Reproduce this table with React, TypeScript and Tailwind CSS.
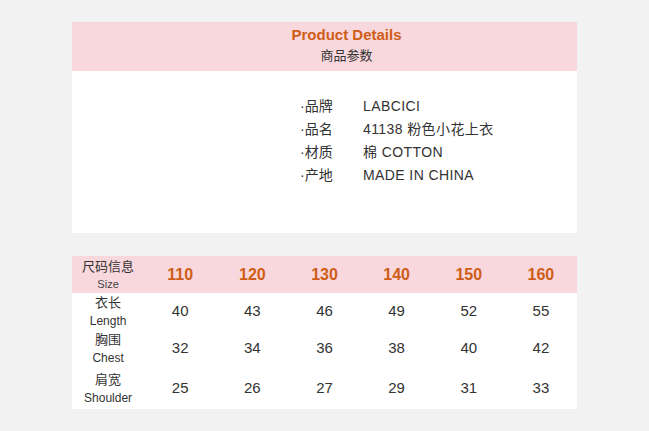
import React from 'react';

const font = { fontFamily: '"Liberation Sans", "Noto Sans CJK SC", sans-serif' };

const info = [
  { label: '品牌', value: 'LABCICI' },
  { label: '品名', value: '41138 粉色小花上衣' },
  { label: '材质', value: '棉 COTTON' },
  { label: '产地', value: 'MADE IN CHINA' },
];

const sizes = ['110', '120', '130', '140', '150', '160'];

const rows = [
  { cn: '衣长', en: 'Length', values: [40, 43, 46, 49, 52, 55], h: 'h-[36px]' },
  { cn: '胸围', en: 'Chest', values: [32, 34, 36, 38, 40, 42], h: 'h-[38px]' },
  { cn: '肩宽', en: 'Shoulder', values: [25, 26, 27, 29, 31, 33], h: 'h-[42px]' },
];

export default function App() {
  return (
    <div className="w-[649px] h-[431px] bg-[#f2f2f2] pt-[22px] pl-[72px]" style={font}>
      {/* 商品参数 */}
      <div className="w-[505px] h-[211px] bg-white">
        <div className="h-[49px] bg-[#f9d8dd] flex flex-col items-center pt-[3px] pl-[44px]">
          <div className="text-[15px] leading-[19px] font-bold text-[#cf5d17]">Product Details</div>
          <div className="text-[13px] leading-[18px] text-[#333] mt-[3px]">商品参数</div>
        </div>
        <div className="pt-[24px] pl-[228px]">
          {info.map((item) => (
            <div key={item.label} className="flex items-center h-[23px] text-[14px] text-[#333]">
              <span className="w-[63px]">·{item.label}</span>
              <span className="tracking-[0.4px]">{item.value}</span>
            </div>
          ))}
        </div>
      </div>

      {/* 尺码表 */}
      <div className="w-[505px] mt-[23px] bg-white">
        <div className="grid grid-cols-7 h-[37px] bg-[#f9d8dd] items-center">
          <div className="flex flex-col items-center">
            <span className="text-[13px] leading-[18px] text-[#333]">尺码信息</span>
            <span className="text-[11px] leading-[16px] text-[#444]">Size</span>
          </div>
          {sizes.map((s) => (
            <div key={s} className="text-center text-[16px] font-bold text-[#cf5d17]">{s}</div>
          ))}
        </div>
        {rows.map((row) => (
          <div key={row.en} className={`grid grid-cols-7 items-center ${row.h}`}>
            <div className="flex flex-col items-center">
              <span className="text-[13px] leading-[19px] text-[#333]">{row.cn}</span>
              <span className="text-[12px] leading-[18px] text-[#333]">{row.en}</span>
            </div>
            {row.values.map((v, i) => (
              <div key={i} className="text-center text-[15px] text-[#333]">{v}</div>
            ))}
          </div>
        ))}
      </div>
    </div>
  );
}
